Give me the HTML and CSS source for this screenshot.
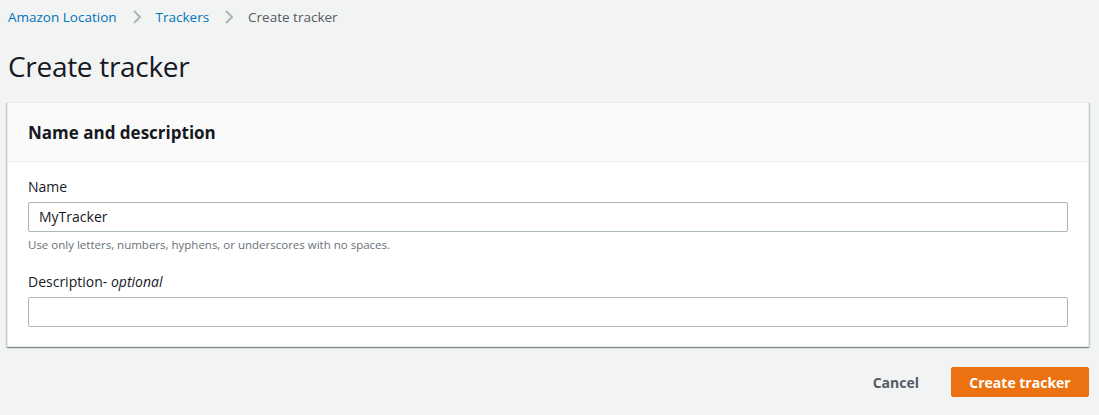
FILE: index.html
```html
<!DOCTYPE html>
<html>
<head>
<meta charset="utf-8">
<link rel="stylesheet" href="styles.css">
</head>
<body>
<div class="page">
  <nav class="crumbs">
    <a class="crumb-link" href="#">Amazon Location</a>
    <svg class="chev" width="16" height="16" viewBox="0 0 16 16"><path d="M5 2l6 6-6 6" fill="none" stroke="#aab7b8" stroke-width="2"/></svg>
    <a class="crumb-link" href="#">Trackers</a>
    <svg class="chev" width="16" height="16" viewBox="0 0 16 16"><path d="M5 2l6 6-6 6" fill="none" stroke="#aab7b8" stroke-width="2"/></svg>
    <span class="crumb-current">Create tracker</span>
  </nav>
  <h1 class="title">Create tracker</h1>
  <section class="panel">
    <header class="panel-head"><h2>Name and description</h2></header>
    <div class="panel-body">
      <div class="field">
        <label class="label">Name</label>
        <div class="input">MyTracker</div>
        <div class="hint">Use only letters, numbers, hyphens, or underscores with no spaces.</div>
      </div>
      <div class="field">
        <label class="label">Description- <i>optional</i></label>
        <div class="input"></div>
      </div>
    </div>
  </section>
  <div class="actions">
    <button class="btn-link">Cancel</button>
    <button class="btn-primary">Create tracker</button>
  </div>
</div>
</body>
</html>
```

FILE: styles.css
```css
html, body { margin: 0; padding: 0; }
body {
  background: #f2f3f3;
  font-family: "Open Sans", "Liberation Sans", sans-serif;
  color: #16191f;
  width: 1099px;
  height: 415px;
  overflow: hidden;
}
.page { padding: 0 10px 0 7px; }
.crumbs {
  display: flex;
  align-items: center;
  height: 34px;
  font-size: 13.5px;
  padding-left: 1px;
}
.crumb-link { color: #0073bb; text-decoration: none; }
.chev { margin: 0 11px 0 12px; }
.crumb-current { color: #545b64; }
.title {
  margin: 0;
  font-weight: 400;
  font-size: 28px;
  line-height: 36px;
  padding: 14px 0 0 1px;
  height: 54px;
  box-sizing: border-box;
  letter-spacing: -0.3px;
}
.panel {
  background: #fff;
  border: 1px solid #eaeded;
  box-shadow: 0 1px 1px 0 rgba(0,28,36,.3), 1px 1px 1px 0 rgba(0,28,36,.15), -1px 1px 1px 0 rgba(0,28,36,.15);
  margin-top: 14px;
}
.panel-head {
  background: #fafafa;
  border-bottom: 1px solid #eaeded;
  height: 58px;
  display: flex;
  align-items: center;
  padding: 0 20px;
}
.panel-head h2 {
  margin: 0;
  font-size: 17px;
  font-weight: 700;
}
.panel-body { padding: 14px 20px 19px 20px; }
.field + .field { margin-top: 17px; }
.label {
  display: block;
  font-size: 14px;
  line-height: 22px;
  margin-bottom: 4px;
}
.input {
  height: 30px;
  box-sizing: border-box;
  border: 1px solid #aab7b8;
  border-radius: 2px;
  font-size: 14px;
  line-height: 28px;
  padding: 0 10px;
}
.hint {
  font-size: 11.5px;
  color: #687078;
  margin-top: 4px;
  line-height: 18px;
}
.actions {
  display: flex;
  justify-content: flex-end;
  align-items: center;
  margin-top: 20px;
  gap: 12px;
}
.btn-link {
  background: none;
  border: none;
  font-family: inherit;
  font-size: 14px;
  font-weight: 700;
  color: #545b64;
  padding: 4px 20px;
  height: 30px;
}
.btn-primary {
  background: #ec7211;
  border: 1px solid #ec7211;
  border-radius: 2px;
  color: #fff;
  font-family: inherit;
  font-size: 14px;
  font-weight: 700;
  height: 30px;
  width: 138px;
  padding: 0;
}
```
